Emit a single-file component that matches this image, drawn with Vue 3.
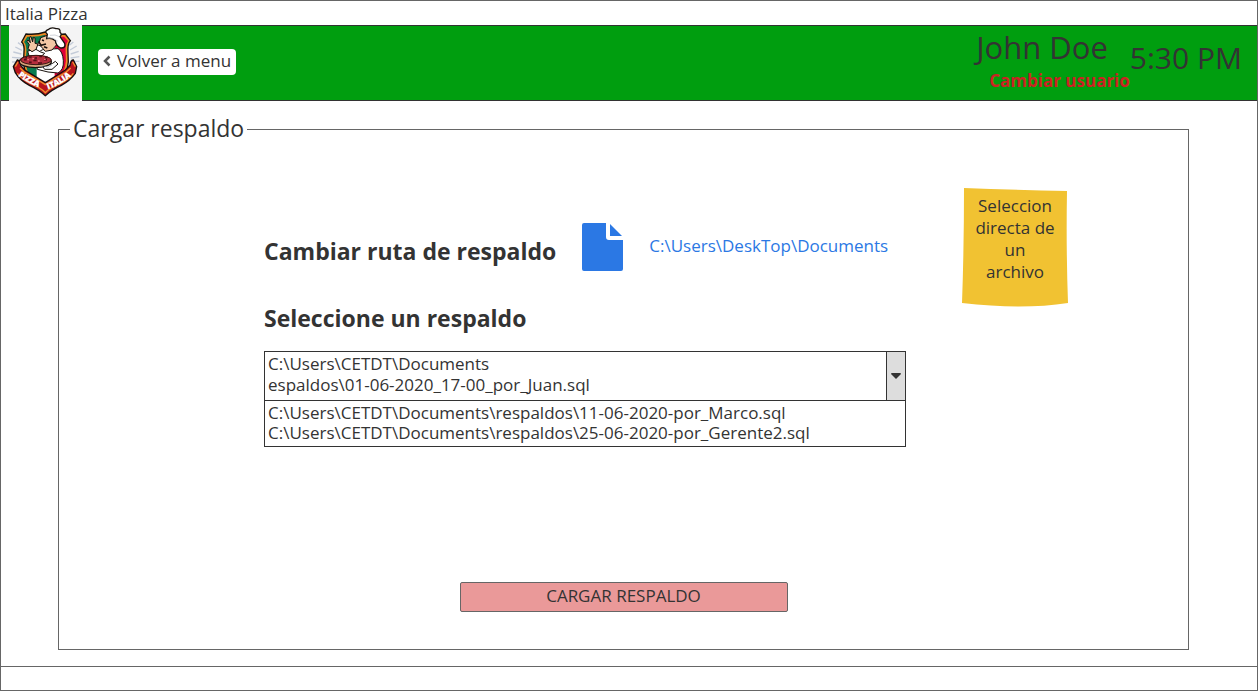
<script setup>
import { ref } from 'vue'

const route = 'C:\\Users\\DeskTop\\Documents'
const current = ['C:\\Users\\CETDT\\Documents', 'espaldos\\01-06-2020_17-00_por_Juan.sql']
const backups = [
  'C:\\Users\\CETDT\\Documents\\respaldos\\11-06-2020-por_Marco.sql',
  'C:\\Users\\CETDT\\Documents\\respaldos\\25-06-2020-por_Gerente2.sql',
]
const selected = ref(null)
const open = ref(true)
</script>

<template>
  <div class="window">
    <div class="titlebar">Italia Pizza</div>

    <header class="header">
      <svg class="logo" viewBox="3 3 219 228" role="img" aria-label="Pizza Italia">
        <rect x="3" y="3" width="219" height="228" fill="#f4f4f4" />
        <g stroke="#c3cbd8" stroke-width="4">
          <path d="M22 69l20 10M16 84l24 6M12 100l26 2M12 114h26M30 56l14 10" />
          <path d="M206 66l-20 12M212 82l-24 8M214 98l-26 4M214 112h-26M196 54l-12 10" />
        </g>
        <path d="M41 54L54 30Q86 33 112 24Q140 34 172 30L187 50Q178 58 180 88Q186 140 158 170Q138 188 112 200Q84 188 64 168Q42 138 48 84Q50 62 41 54Z" fill="#f08a24" stroke="#17110d" stroke-width="4" />
        <path d="M48 54L58 38Q88 40 112 32V188Q82 176 66 158Q49 130 55 84Q56 62 48 54Z" fill="#087c4e" />
        <path d="M112 32Q140 40 168 38L180 51Q171 62 173 88Q178 134 154 162Q138 176 112 188Z" fill="#e00038" />
        <path d="M86 58h54v122l-28 14-26-14z" fill="#fff" />
        <path d="M22 146L16 128L28 108Q38 110 38 124L50 138Q86 160 112 176Q140 158 172 138L186 124Q188 108 196 108L206 128L202 148Q186 170 160 184Q130 198 112 215Q94 198 64 184Q36 170 22 146Z" fill="#b8141c" stroke="#17110d" stroke-width="4" />
        <path d="M22 128L30 114M28 148Q42 166 68 179Q96 190 112 206Q128 190 156 179Q182 166 196 148M202 128L194 114M36 132L50 145Q88 166 112 182Q138 164 174 145L188 132" fill="none" stroke="#f0902d" stroke-width="4" />
        <path d="M88 92Q96 76 112 76L150 74Q164 82 166 110Q168 138 150 147L120 144L88 136L84 112Z" fill="#fff" stroke="#17110d" stroke-width="3" />
        <path d="M59 82L80 74L98 84L110 88L94 102L66 104Z" fill="#fff" stroke="#17110d" stroke-width="3" />
        <path d="M60 74L64 62L57 52L60 48L67 56L64 40L69 38L74 54L76 40L81 42L81 58L90 60L84 76L72 83Z" fill="#f3c7a5" stroke="#17110d" stroke-width="3" />
        <path d="M98 41L118 34L142 48L146 62L132 78L112 82L98 66L88 62L94 54Z" fill="#f3c7a5" stroke="#17110d" stroke-width="3" />
        <path d="M116 44L118 31Q108 22 120 17Q130 8 144 14Q158 12 156 25Q163 31 156 38L170 58Q174 73 158 72Q144 66 142 50Q130 40 116 44Z" fill="#fff" stroke="#17110d" stroke-width="4" />
        <path d="M118 42Q136 38 150 52M126 34Q142 30 154 38" fill="none" stroke="#b8bdc6" stroke-width="2" />
        <path d="M92 52L99 64L114 60M102 48L108 50M108 68L118 72" fill="none" stroke="#17110d" stroke-width="5" />
        <path d="M94 114Q112 130 134 118L142 112L150 120L132 136L110 136Z" fill="#fff" stroke="#17110d" stroke-width="3" />
        <ellipse cx="82" cy="113" rx="48" ry="18" fill="#d5a178" stroke="#17110d" stroke-width="4" />
        <ellipse cx="84" cy="108" rx="46" ry="14" fill="#b52e3d" stroke="#3a1712" stroke-width="3" />
        <path d="M48 107h8m6-8h9m5 10h10m8-12h8m6 10h9M63 115h8m19 2h12m9-17h8M80 102h7M52 101h5" stroke="#501018" stroke-width="5" />
        <path d="M58 107h5m10-3h5m12 7h5m13-5h5" stroke="#ef7480" stroke-width="4" />
        <path d="M94 128Q108 122 120 130L132 122" fill="none" stroke="#8f9aa8" stroke-width="2" />
        <path id="motto-left" d="M30 155Q60 178 106 195" fill="none" />
        <path id="motto-right" d="M120 196Q164 180 200 148" fill="none" />
        <g class="motto">
          <text><textPath href="#motto-left">PIZZA</textPath></text>
          <text><textPath href="#motto-right">ITALIA</textPath></text>
        </g>
      </svg>

      <button class="back" type="button">
        <svg class="chevron" viewBox="0 0 8 12" aria-hidden="true">
          <path d="M6.5 1.5L2 6l4.500 4.500" />
        </svg>
        <span>Volver a menu</span>
      </button>

      <div class="user">
        <span class="name">John Doe</span>
        <a class="switch" href="#">Cambiar usuario</a>
      </div>
      <time class="time" datetime="17:30">5:30 PM</time>
    </header>

    <main class="main">
      <fieldset class="panel">
        <legend>Cargar respaldo</legend>

        <div class="body">
          <div class="content">
            <div class="route">
              <h2>Cambiar ruta de respaldo</h2>
              <svg class="file" viewBox="0 0 41 48" aria-hidden="true">
                <path d="M2 0H24V14Q24 17 27 17H41V46Q41 48 39 48H2Q0 48 0 46V2Q0 0 2 0Z" />
                <path d="M28 1L40 13H28Z" />
              </svg>
              <a class="path" href="#">{{ route }}</a>
            </div>

            <h2 id="backup-label">Seleccione un respaldo</h2>
            <div class="combo">
              <button
                class="current"
                type="button"
                aria-labelledby="backup-label"
                aria-haspopup="listbox"
                :aria-expanded="open"
                @click="open = !open"
              >
                <span class="value">
                  <span v-for="line in current" :key="line">{{ line }}</span>
                </span>
                <span class="arrow">
                  <svg viewBox="0 0 10 6" aria-hidden="true"><path d="M0 1Q0 0 1 0H9Q10 0 10 1L5 6Z" /></svg>
                </span>
              </button>
              <select v-show="open" v-model="selected" class="list" size="2" aria-labelledby="backup-label">
                <option v-for="item in backups" :key="item" :value="item">{{ item }}</option>
              </select>
            </div>
          </div>

          <aside class="note">
            <svg class="paper" viewBox="0 0 106 119" preserveAspectRatio="none" aria-hidden="true">
              <path d="M2 0Q50 2 105 3Q104 60 106 115Q60 122 0 115Q2 60 2 0Z" />
            </svg>
            <p>Seleccion directa de un archivo</p>
          </aside>
        </div>

        <button class="submit" type="button">CARGAR RESPALDO</button>
      </fieldset>
    </main>

    <footer class="statusbar"></footer>
  </div>
</template>

<style>
body {
  margin: 0;
  background: #fff;
}
</style>

<style scoped>
* {
  box-sizing: border-box;
}

.window {
  display: flex;
  flex-direction: column;
  min-height: 100vh;
  border: 1px solid #666;
  color: #333;
  font-family: "Open Sans", "Noto Sans", sans-serif;
  font-size: 17px;
  line-height: 20px;
}

button,
select {
  font: inherit;
  color: inherit;
}

a {
  text-decoration: none;
}

.titlebar {
  height: 24px;
  padding: 3px 4px 0;
}

.header {
  display: flex;
  align-items: flex-start;
  height: 76px;
  padding: 0 15px 0 8px;
  border-top: 1px solid #333;
  border-bottom: 1px solid #333;
  background: #009e0f;
}

.logo {
  flex: none;
  width: 73px;
  height: 76px;
  margin-top: -1px;
}

.motto {
  fill: #fff;
  stroke: #fff;
  stroke-width: 1px;
  font-family: "Open Sans", sans-serif;
  font-size: 24px;
  font-weight: 800;
}

.back {
  display: flex;
  align-items: center;
  gap: 6px;
  height: 26px;
  margin: 23px 0 0 16px;
  padding: 0 5px 2px 5px;
  border: 0;
  border-radius: 4px;
  background: #fff;
}

.chevron {
  width: 8px;
  height: 12px;
  fill: none;
  stroke: #555;
  stroke-width: 2.5;
}

.user {
  display: flex;
  flex-direction: column;
  align-items: flex-end;
  margin-left: auto;
}

.name {
  padding: 0 22px 0 0;
  font-size: 31px;
  line-height: 43px;
}

.switch {
  color: #cc2222;
  font-weight: 700;
  font-size: 17px;
  line-height: 23px;
}

.time {
  margin-top: 12px;
  font-size: 30px;
  line-height: 40px;
}

.main {
  flex: 1;
  display: flex;
  padding: 11px 68px 16px 57px;
}

.panel {
  flex: 1;
  display: flex;
  flex-direction: column;
  min-width: 0;
  margin: 0;
  padding: 42px 0 37px;
  border: 1px solid #666;
}

legend {
  margin-left: 11px;
  padding: 0 3px 2px;
  font-size: 23px;
  line-height: 32px;
}

.body {
  display: flex;
  align-items: flex-start;
  gap: 56px;
  padding: 0 120px 0 205px;
}

.content {
  flex: 1;
  padding-top: 34px;
}

h2 {
  margin: 0;
  font-size: 23px;
  line-height: 32px;
}

.route {
  display: flex;
  align-items: center;
  height: 50px;
  margin-bottom: 30px;
}

.route h2 {
  padding-top: 8px;
}

.file {
  width: 41px;
  height: 48px;
  margin: 0 26px;
  fill: #2b78e4;
}

.path {
  padding-bottom: 2px;
  color: #2b78e4;
}

.combo {
  margin-top: 17px;
  border: 1px solid #333;
}

.current {
  display: flex;
  width: 100%;
  height: 48px;
  padding: 0;
  border: 0;
  background: #fff;
  text-align: left;
}

.value {
  flex: 1;
  display: flex;
  flex-direction: column;
  padding: 1px 3px 0;
  line-height: 21px;
}

.arrow {
  display: flex;
  align-items: center;
  justify-content: center;
  width: 19px;
  height: 100%;
  border-left: 1px solid #333;
  background: #ddd;
}

.arrow svg {
  width: 10px;
  height: 6px;
  fill: #333;
}

.list {
  display: block;
  width: 100%;
  height: 46px;
  padding: 0;
  border: 0;
  border-top: 1px solid #333;
  border-radius: 0;
  background: #fff;
  overflow: hidden;
  appearance: none;
}

.list option {
  height: 20px;
  min-height: 20px;
  padding: 0 3px;
  line-height: 20px;
}

.note {
  position: relative;
  width: 106px;
  height: 119px;
  padding: 7px 12px;
  text-align: center;
  line-height: 22px;
}

.paper {
  position: absolute;
  inset: 0;
  width: 100%;
  height: 100%;
  fill: #f1c232;
}

.note p {
  position: relative;
  margin: 0;
}

.submit {
  width: 328px;
  height: 30px;
  margin: auto auto 0;
  padding: 0 0 2px;
  border: 1px solid #666;
  border-radius: 2px;
  background: #ea9999;
}

.statusbar {
  height: 24px;
  border-top: 1px solid #666;
}
</style>
